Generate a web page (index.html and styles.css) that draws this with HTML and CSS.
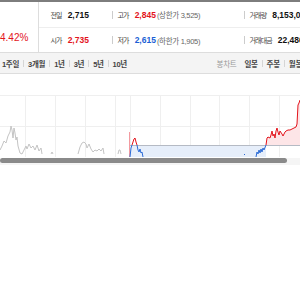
FILE: index.html
```html
<!DOCTYPE html>
<html lang="ko">
<head>
  <meta charset="UTF-8" />
  <meta name="viewport" content="width=device-width, initial-scale=1.0"/>
  <title>시세</title>
  <link rel="stylesheet" href="styles.css">
</head>
<body>
<div class="page">
  <div class="top-bar"></div>

  <div class="summary">
    <div class="rate-box">
      <span class="rate">4.42%</span>
    </div>
    <div class="stats">
      <div class="stat-row">
        <div class="cell cell-prev"><span class="label">전일</span><span class="num">2,715</span></div>
        <div class="cell cell-high"><span class="label">고가</span><span class="num up">2,845</span><span class="limit">(상한가 3,525)</span></div>
        <div class="cell cell-vol"><span class="label">거래량</span><span class="num">8,153,071</span></div>
      </div>
      <div class="stat-row">
        <div class="cell cell-prev"><span class="label">시가</span><span class="num up">2,735</span></div>
        <div class="cell cell-high"><span class="label">저가</span><span class="num down">2,615</span><span class="limit">(하한가 1,905)</span></div>
        <div class="cell cell-vol"><span class="label">거래대금</span><span class="num">22,486</span></div>
      </div>
    </div>
  </div>

  <div class="tabs">
    <div class="tab-group">
      <span class="tab">1주일</span>
      <span class="tab">3개월</span>
      <span class="tab">1년</span>
      <span class="tab">3년</span>
      <span class="tab">5년</span>
      <span class="tab">10년</span>
    </div>
    <div class="tab-group chart-type">
      <span class="muted">봉차트</span>
      <span class="tab">일봉</span>
      <span class="tab">주봉</span>
      <span class="tab">월봉</span>
    </div>
  </div>

  <svg class="chart" width="310" height="83" viewBox="0 74 310 83">
    <!-- grid -->
    <g stroke="#efefef" stroke-width="1">
      <line x1="0" y1="95.5" x2="310" y2="95.5"/>
      <line x1="0" y1="126.5" x2="310" y2="126.5"/>
      <line x1="25.5" y1="95" x2="25.5" y2="157"/>
      <line x1="55.5" y1="95" x2="55.5" y2="157"/>
      <line x1="85.5" y1="95" x2="85.5" y2="157"/>
      <line x1="115.5" y1="95" x2="115.5" y2="157"/>
      <line x1="130.5" y1="95" x2="130.5" y2="157"/>
      <line x1="160.5" y1="95" x2="160.5" y2="157"/>
      <line x1="190.5" y1="95" x2="190.5" y2="157"/>
      <line x1="219.5" y1="95" x2="219.5" y2="157"/>
      <line x1="249.5" y1="95" x2="249.5" y2="157"/>
      <line x1="279.5" y1="95" x2="279.5" y2="157"/>
    </g>

    <!-- fills -->
    <rect x="130" y="145" width="136" height="12" fill="#e6eefa"/>
    <path d="M266,145 L267,138 L268,137 L270,138 L271,135 L272,131 L273,136 L274,134 L275,138 L276,131 L277,128 L278,132 L279,135 L280,131 L282,134 L283,136 L285,132 L286,131 L288,130 L290,130 L292,129 L294,128 L296,127 L297,124 L298,105 L299,103 L300,100 L310,96 L310,145 Z" fill="#fde5e7"/>
    <line x1="130" y1="145.5" x2="310" y2="145.5" stroke="#b5bac4" stroke-width="1"/>

    <!-- past range -->
    <g fill="none" stroke="#c4c4c4" stroke-width="1">
      <path d="M0,150 L2,146 L4,141 L6,143 L8,136 L10,132 L11,126 L12,130 L13,138 L14,128 L15,133 L16,140 L17,137 L18,146 L20,153 L22,154 L24,150 L26,146 L27,149 L29,144 L31,148 L33,146 L35,150 L37,145 L39,151 L41,148 L42,154"/>
      <path d="M51,154 L52,152 L53,154"/>
      <path d="M78,154 L80,147 L82,143 L84,142 L86,144 L87,148 L89,144 L91,149 L93,152 L95,150 L97,151 L99,149 L101,151 L103,148 L104,154"/>
      <path d="M118,154 L119,150 L120,150 L121,154"/>
    </g>

    <!-- current range -->
    <line x1="129.5" y1="132" x2="129.5" y2="157" stroke="#f39aa0" stroke-width="1"/>
    <g fill="none" stroke-width="1">
      <path d="M130,157 L131,148 L132,145" stroke="#2b6bd6"/>
      <path d="M132,145 L134,139 L135,138 L136,142 L137,145" stroke="#e3141c"/>
      <path d="M137,145 L138,150 L139,152 L140,149 L141,153 L142,152 L143,157" stroke="#2b6bd6"/>
      <path d="M244,155 L245,154" stroke="#2b6bd6"/>
      <path d="M256,157 L257,152 L258,154 L259,150 L260,153 L261,149 L262,152 L263,148 L264,150 L266,145" stroke="#2b6bd6"/>
      <path d="M266,145 L267,138 L268,137 L270,138 L271,135 L272,131 L273,136 L274,134 L275,138 L276,131 L277,128 L278,132 L279,135 L280,131 L282,134 L283,136 L285,132 L286,131 L288,130 L290,130 L292,129 L294,128 L296,127 L297,124 L298,105 L299,103 L300,100 L310,96" stroke="#e3141c"/>
    </g>
  </svg>

  <div class="scroll">
    <div class="thumb"></div>
  </div>
</div>
</body>
</html>
```

FILE: styles.css
```css
html, body {
  margin: 0;
  overflow: hidden;
  background: #fff;
}
body {
  font-family: "Liberation Sans", "Noto Sans CJK KR", sans-serif;
  color: #333;
}
.page {
  width: 310px;
}
.top-bar {
  height: 2px;
  background: #7d7d7d;
}
.summary {
  display: flex;
  border-bottom: 1px solid #ddd;
}
.rate-box {
  width: 64px;
  box-sizing: border-box;
  border-right: 1px solid #ddd;
  display: flex;
  flex-direction: column;
  justify-content: flex-end;
  padding-bottom: 8px;
}
.rate {
  font-size: 10px;
  line-height: 12px;
  color: #e3141c;
}
.stats {
  flex: 1;
}
.stat-row {
  display: flex;
  align-items: center;
  height: 25px;
  border-bottom: 1px solid #eee;
}
.stat-row + .stat-row {
  height: 24px;
  border-bottom: none;
}
.cell {
  display: flex;
  align-items: center;
  white-space: nowrap;
}
.cell-prev {
  width: 73px;
  padding-left: 12px;
  box-sizing: border-box;
}
.cell-high {
  width: 132px;
}
.cell-high::before, .cell-vol::before {
  content: "";
  width: 1px;
  height: 8px;
  background: #ccc;
  margin-right: 5px;
}
.label {
  font-size: 7px;
  letter-spacing: -0.9px;
  color: #444;
  margin-right: 6px;
}
.num {
  font-size: 8.5px;
  font-weight: bold;
  color: #111;
}
.num.up {
  color: #e3141c;
}
.num.down {
  color: #1a5fd5;
}
.limit {
  font-size: 7.5px;
  letter-spacing: -0.3px;
  color: #666;
  margin-left: 1px;
}
.tabs {
  display: flex;
  align-items: center;
  height: 20px;
  background: #f4f4f4;
  border-bottom: 1px solid #ddd;
  padding: 0 8px 0 2px;
  font-size: 7.5px;
  white-space: nowrap;
}
.tab-group {
  display: flex;
  align-items: center;
}
.tab {
  display: flex;
  align-items: center;
  font-weight: bold;
  color: #444;
  letter-spacing: -0.3px;
}
.tab + .tab::before {
  content: "";
  width: 1px;
  height: 7px;
  background: #d5d5d5;
  margin: 0 4px 0 4px;
}
.chart-type {
  margin-left: auto;
}
.muted {
  color: #999;
  letter-spacing: -0.3px;
  margin-right: 8px;
}
.chart {
  display: block;
}
.scroll {
  height: 7px;
  background: #f5f5f5;
}
.thumb {
  width: 287px;
  height: 5px;
  margin-top: 1px;
  background: #8a8a8a;
  border-radius: 3px;
}
```
